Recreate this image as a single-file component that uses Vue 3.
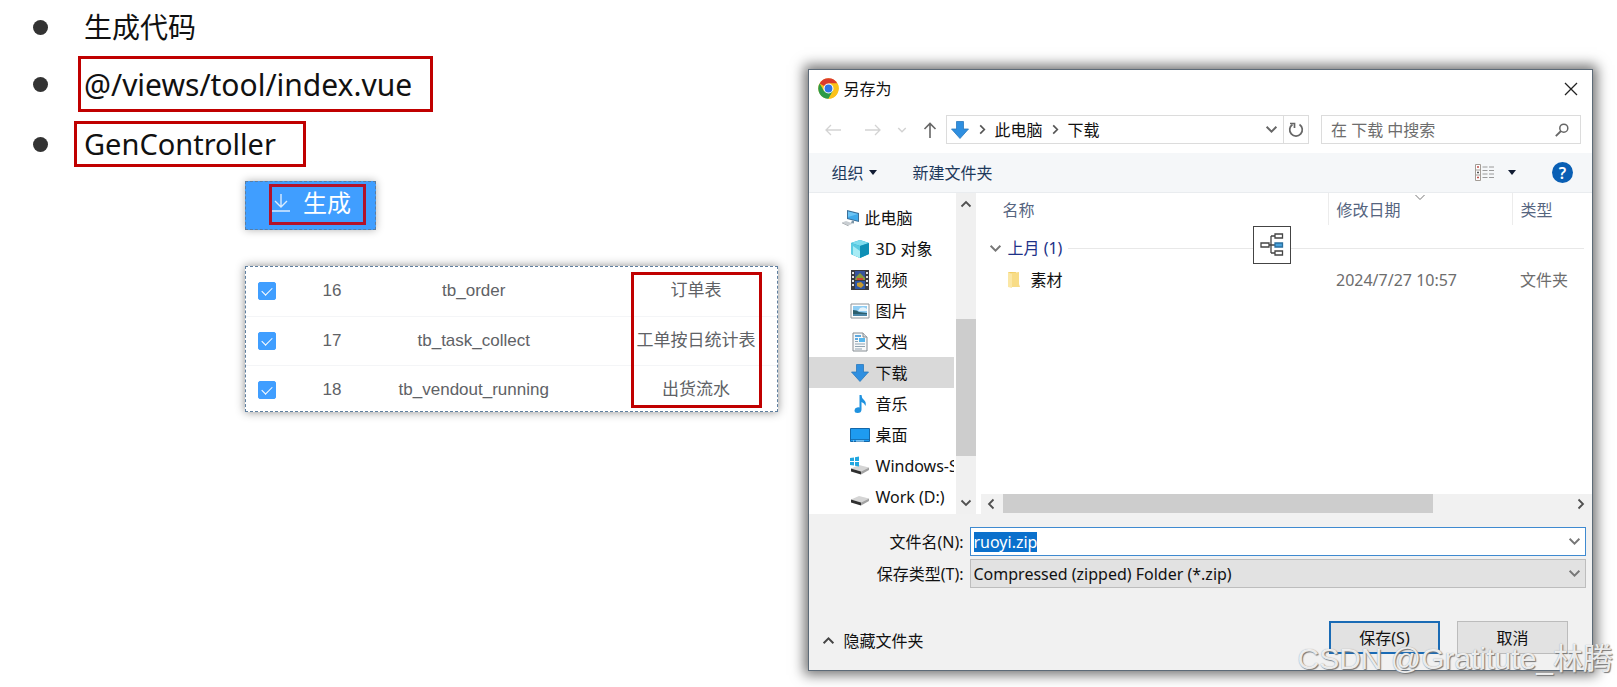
<template>
  <svg class="sprite" aria-hidden="true">
    <symbol id="ico-pc" viewBox="0 0 20 18">
      <path d="M6 1l12 3v9L6 10z" fill="#3c6f98" />
      <path d="M7 2.500l10 2.500v6.700L7 9.200z" fill="#3fa9ea" />
      <path d="M7 2.500l10 2.500-10 3z" fill="#6cc4f5" />
      <path d="M11 11.500l2 .5v2.500l-3-.6z" fill="#7f97a8" />
      <path d="M1 13.500l4-1.500 7 2.500-4.500 2z" fill="#c9ced2" />
      <path d="M1 13.500l6.500 3v.8L1 14.300z" fill="#92999f" />
    </symbol>
    <symbol id="ico-cube" viewBox="0 0 20 20">
      <path d="M10 1l9 3v11l-9 4-9-4V4z" fill="#18a6c8" />
      <path d="M10 1l9 3-9 3-9-3z" fill="#7fdcee" />
      <path d="M1 4l9 3v12l-9-4z" fill="#5ccbe2" />
      <path d="M3 7l7 5v7l-7-3z" fill="#a8ecf5" />
      <path d="M10 7l9-3v11l-9 4z" fill="#0e8fb5" />
    </symbol>
    <symbol id="ico-video" viewBox="0 0 20 20">
      <path d="M1 0h18v20H1z" fill="#3b3b40" />
      <path d="M5 1h10v9H5z" fill="#38549c" />
      <path d="M5 11h10v8H5z" fill="#2c55a5" />
      <path d="M6 7l4-4 5 5v2H5z" fill="#8a9a3a" />
      <path d="M7 8h6v2H7z" fill="#d0443a" />
      <path d="M7 13l4-1 3 3-3 3-4-2z" fill="#c89b2f" />
      <path d="M2 2h2v2H2zM2 6h2v2H2zM2 10h2v2H2zM2 14h2v2H2zM16 2h2v2h-2zM16 6h2v2h-2zM16 10h2v2h-2zM16 14h2v2h-2z" fill="#e8e8e8" />
    </symbol>
    <symbol id="ico-image" viewBox="0 0 20 20">
      <path d="M1 3h18v14H1z" fill="#fff" stroke="#8d9499" />
      <path d="M3 5h14v10H3z" fill="#8fcdf3" />
      <path d="M10 7q4-2 7 1v2H8z" fill="#e4f3fb" />
      <path d="M3 9q4 0 6 2l8 1v3H3z" fill="#2c5f6e" />
      <path d="M3 13h14v2H3z" fill="#4a86a8" />
    </symbol>
    <symbol id="ico-doc" viewBox="0 0 20 20">
      <path d="M3 1h10l4 4v14H3z" fill="#f7f9fa" stroke="#868d93" />
      <path d="M13 1v4h4" fill="#d4dade" stroke="#868d93" />
      <path d="M5 4h6M5 7h3" stroke="#2f8fd6" stroke-width="1.500" />
      <path d="M9 6h6v4H9z" fill="#56b6ec" />
      <path d="M5 9.500h3M5 12h10M5 14.500h10M5 17h7" stroke="#8fa3b1" />
    </symbol>
    <symbol id="ico-down" viewBox="0 0 20 20">
      <path d="M6.500 1.500h7V9h5L10 18.500 1.500 9h5z" fill="#2f8fe0" stroke="#2a78bd" stroke-width=".8" />
    </symbol>
    <symbol id="ico-music" viewBox="0 0 20 20">
      <path d="M9.500 1h2q0 3 2.500 5t1.500 6q-1-3-4-4v7.500q0 3.500-4 3.500-3 0-3-2.500T7 13.500q1.500-.5 2.500 0z" fill="#1f92df" />
    </symbol>
    <symbol id="ico-desk" viewBox="0 0 20 20">
      <path d="M.5 3.500h19v13H.5z" fill="#1e9bf0" stroke="#1467a8" />
      <path d="M1 14.500h18" stroke="#1773b8" />
      <path d="M3 16h1M6 16h8" stroke="#bfe3fa" />
    </symbol>
    <symbol id="ico-disk" viewBox="0 0 20 20">
      <path d="M1 12.500l8-3.500 10 2.500-8 4z" fill="#d5d5d5" />
      <path d="M1 12.500l10 3v3l-10-3z" fill="#2f2f2f" />
      <path d="M11 15.500l8-4v2.500l-8 4.500z" fill="#a3a3a3" />
    </symbol>
    <symbol id="ico-windisk" viewBox="0 0 20 20">
      <use href="#ico-disk" />
      <path d="M0 2l4-.6V5H0zM5 1.200L9 .6V5H5zM0 6h4v3.600L0 9zM5 6h4v4.400l-4-.6z" fill="#22a7e0" />
    </symbol>
    <symbol id="ico-chev" viewBox="0 0 12 12">
      <path d="M1.500 3.500L6 8l4.500-4.500" fill="none" stroke="currentColor" stroke-width="1.800" />
    </symbol>
  </svg>

  <main class="page">
    <section class="notes">
      <ul class="points">
        <li>生成代码</li>
        <li><span class="mark path">@/views/tool/index.vue</span></li>
        <li><span class="mark class-name">GenController</span></li>
      </ul>

      <button type="button" class="gen-btn">
        <span class="gen-mark">
          <svg width="18" height="20" viewBox="0 0 18 20">
            <path d="M9 1v13M3 8l6 6 6-6M0 18h18" fill="none" stroke="#d9ecff" stroke-width="1.400" />
          </svg>
          生成
        </span>
      </button>

      <div class="table-card">
        <table class="gen-table">
          <tbody>
            <tr v-for="row in tables" :key="row.id">
              <td class="col-check">
                <input v-model="row.checked" type="checkbox" :aria-label="row.name" />
              </td>
              <td class="col-id">{{ row.id }}</td>
              <td class="col-name">{{ row.name }}</td>
              <td class="col-comment">{{ row.comment }}</td>
            </tr>
          </tbody>
        </table>
        <div class="column-mark"></div>
      </div>
    </section>

    <section class="dialog" role="dialog" aria-label="另存为">
      <header class="title-bar">
        <svg class="chrome" width="21" height="21" viewBox="0 0 42 42">
          <circle cx="21" cy="21" r="20.500" fill="#fbc21a" />
          <path d="M21 21L3.200 10.800A20.500 20.500 0 0 1 38.800 10.800H21z" fill="#dc3b2c" />
          <path d="M3.200 10.800A20.500 20.500 0 0 0 21 41.500L29.900 26 21 21 12 26z" fill="#2c9a47" />
          <path d="M21 11h17.800A20.500 20.500 0 0 1 21 41.500L30 26z" fill="#fbc21a" />
          <circle cx="21" cy="21" r="10" fill="#fff" />
          <circle cx="21" cy="21" r="7.800" fill="#2f74e6" />
        </svg>
        <span>另存为</span>
        <button type="button" class="close" aria-label="关闭">
          <svg width="14" height="14" viewBox="0 0 14 14">
            <path d="M1 1l12 12M13 1L1 13" stroke="#222" stroke-width="1.300" />
          </svg>
        </button>
      </header>

      <div class="nav-bar">
        <div class="nav-buttons">
          <button type="button" disabled aria-label="后退">
            <svg width="16" height="14" viewBox="0 0 16 14">
              <path d="M16 7H1M6 2L1 7l5 5" fill="none" stroke="#d3d3d3" stroke-width="1.300" />
            </svg>
          </button>
          <button type="button" class="forward" disabled aria-label="前进">
            <svg width="16" height="14" viewBox="0 0 16 14">
              <path d="M0 7h15M10 2l5 5-5 5" fill="none" stroke="#d3d3d3" stroke-width="1.300" />
            </svg>
          </button>
          <button type="button" class="recent" disabled aria-label="最近">
            <svg width="10" height="10"><use href="#ico-chev" /></svg>
          </button>
          <button type="button" aria-label="上移">
            <svg width="14" height="16" viewBox="0 0 14 16">
              <path d="M7 16V1.500M1.500 7L7 1.500 12.500 7" fill="none" stroke="#666" stroke-width="1.600" />
            </svg>
          </button>
        </div>
        <div class="address">
          <svg width="20" height="20"><use href="#ico-down" /></svg>
          <svg class="crumb" width="11" height="11"><use href="#ico-chev" /></svg>
          <span>此电脑</span>
          <svg class="crumb" width="11" height="11"><use href="#ico-chev" /></svg>
          <span>下载</span>
          <button type="button" class="expand" aria-label="展开">
            <svg width="13" height="13"><use href="#ico-chev" /></svg>
          </button>
          <button type="button" class="refresh" aria-label="刷新">
            <svg width="16" height="16" viewBox="0 0 16 16">
              <path d="M11.500 2.500A6.300 6.300 0 1 1 4.500 2.500" fill="none" stroke="#666" stroke-width="1.700" />
              <path d="M2 1.500h4.500V6" fill="none" stroke="#666" stroke-width="1.700" />
            </svg>
          </button>
        </div>
        <label class="search">
          <input v-model="query" type="text" placeholder="在 下载 中搜索" aria-label="搜索" />
          <svg width="14" height="14" viewBox="0 0 14 14">
            <circle cx="8.800" cy="5.200" r="4" fill="none" stroke="#666" stroke-width="1.500" />
            <path d="M6 8L.8 13.200" stroke="#666" stroke-width="1.800" />
          </svg>
        </label>
      </div>

      <div class="tool-bar">
        <button type="button">组织<i class="caret"></i></button>
        <button type="button">新建文件夹</button>
        <button type="button" class="view" aria-label="更改视图">
          <svg width="19" height="17" viewBox="0 0 19 17">
            <path d="M.5.5h5v16h-5zM.5 6h5M.5 11h5" fill="#fff" stroke="#a39c96" />
            <path d="M2 3h2M2 13.500h2" stroke="#c0504d" stroke-width="1.500" />
            <path d="M2 8.500h2" stroke="#555" stroke-width="1.500" />
            <path d="M7.500 3h5M14 3h5M7.500 6.500h5M14 6.500h5M7.500 10h5M14 10h5M7.500 13.500h5M14 13.500h5" stroke="#9a9a9a" />
          </svg>
          <i class="caret"></i>
        </button>
        <button type="button" class="help" aria-label="帮助">?</button>
      </div>

      <div class="browser">
        <nav class="tree">
          <ul>
            <li
              v-for="place in places"
              :key="place.label"
              :class="{ root: place.root, selected: place.label === selected }"
              @click="selected = place.label"
            >
              <svg width="20" height="20"><use :href="'#ico-' + place.icon" /></svg>
              <span>{{ place.label }}</span>
            </li>
          </ul>
          <div class="v-scroll">
            <svg class="up" width="12" height="12"><use href="#ico-chev" /></svg>
            <div class="thumb"></div>
            <svg width="12" height="12"><use href="#ico-chev" /></svg>
          </div>
        </nav>

        <div class="files">
          <table>
            <thead>
              <tr>
                <th class="f-name">名称</th>
                <th class="f-date">
                  修改日期
                  <svg class="sort" width="12" height="12" viewBox="0 0 12 12">
                    <path d="M1.500 2L6 6.500 10.500 2" fill="none" stroke="#777" />
                  </svg>
                </th>
                <th class="f-type">类型</th>
              </tr>
            </thead>
            <tbody>
              <tr>
                <td colspan="3" class="group">
                  <div class="group-line">
                    <svg width="13" height="13"><use href="#ico-chev" /></svg>
                    <span>上月 (1)</span>
                  </div>
                </td>
              </tr>
              <tr>
                <td class="f-name">
                  <div class="file-name">
                    <svg width="14" height="18" viewBox="0 0 14 18">
                      <path d="M1 1h8v15H1z" fill="#f0cc63" />
                      <path d="M4 2l8-1v12l1 3H4z" fill="#f8dc86" />
                      <path d="M1 1l4 2v14l-4-1z" fill="#fbe7a5" />
                    </svg>
                    <span>素材</span>
                  </div>
                </td>
                <td class="f-date">2024/7/27 10:57</td>
                <td class="f-type">文件夹</td>
              </tr>
            </tbody>
          </table>
          <div class="h-scroll">
            <svg class="left" width="12" height="12"><use href="#ico-chev" /></svg>
            <div class="track"><div class="thumb"></div></div>
            <svg class="right" width="12" height="12"><use href="#ico-chev" /></svg>
          </div>
          <div class="layout-badge">
            <svg width="24" height="24" viewBox="0 0 24 24">
              <path d="M8 12h7M11 3v17M11 3h4M11 20h4" fill="none" stroke="#444" stroke-width="1.300" />
              <path d="M1 10h8v4H1zM15 1h7.500v4H15zM15 18h7.500v4H15z" fill="#fff" stroke="#444" stroke-width="1.300" />
              <path d="M15 10h7.500v4H15z" fill="#4aa3dc" stroke="#2a6f9f" stroke-width="1.300" />
            </svg>
          </div>
        </div>
      </div>

      <footer class="foot">
        <div class="field">
          <label for="file-name">文件名(N):</label>
          <div class="control">
            <input id="file-name" ref="nameInput" v-model="fileName" type="text" />
            <svg width="13" height="13"><use href="#ico-chev" /></svg>
          </div>
        </div>
        <div class="field">
          <label for="file-type">保存类型(T):</label>
          <div class="control grey">
            <select id="file-type">
              <option>Compressed (zipped) Folder (*.zip)</option>
            </select>
            <svg width="13" height="13"><use href="#ico-chev" /></svg>
          </div>
        </div>
        <div class="actions">
          <button type="button" class="hide-folders">
            <svg width="13" height="13"><use href="#ico-chev" /></svg>
            隐藏文件夹
          </button>
          <button type="button" class="btn primary">保存(S)</button>
          <button type="button" class="btn">取消</button>
        </div>
      </footer>
    </section>

    <div class="watermark">CSDN @Gratitute_林腾</div>
  </main>
</template>

<script setup>
import { ref, onMounted } from 'vue'

const tables = ref([
  { id: 16, name: 'tb_order', comment: '订单表', checked: true },
  { id: 17, name: 'tb_task_collect', comment: '工单按日统计表', checked: true },
  { id: 18, name: 'tb_vendout_running', comment: '出货流水', checked: true }
])

const places = [
  { label: '此电脑', icon: 'pc', root: true },
  { label: '3D 对象', icon: 'cube' },
  { label: '视频', icon: 'video' },
  { label: '图片', icon: 'image' },
  { label: '文档', icon: 'doc' },
  { label: '下载', icon: 'down' },
  { label: '音乐', icon: 'music' },
  { label: '桌面', icon: 'desk' },
  { label: 'Windows-SSD (C:)', icon: 'windisk' },
  { label: 'Work (D:)', icon: 'disk' }
]

const selected = ref('下载')
const query = ref('')
const fileName = ref('ruoyi.zip')
const nameInput = ref(null)

onMounted(() => {
  nameInput.value.focus()
  nameInput.value.select()
})
</script>

<style>
body {
  margin: 0;
  background: #fff;
}
</style>

<style scoped>
* {
  box-sizing: border-box;
}

.sprite {
  position: absolute;
  width: 0;
  height: 0;
}

button,
input,
select {
  font: inherit;
  color: inherit;
  margin: 0;
  padding: 0;
  border: 0;
  background: none;
}

ul {
  list-style: none;
  margin: 0;
  padding: 0;
}

svg {
  display: block;
  flex: none;
}

.page {
  position: relative;
  display: grid;
  grid-template-columns: 1fr 1fr;
  align-items: start;
  font-family: "Noto Sans", "Noto Sans CJK SC", sans-serif;
  font-size: 16px;
  line-height: 20px;
  color: #111;
}

/* left side */
.notes {
  padding-right: 31px;
}

.points li {
  display: flex;
  align-items: center;
  height: 60px;
  padding-left: 33px;
  font-size: 28px;
  line-height: 40px;
  white-space: nowrap;
}

.points li:first-child {
  height: 54px;
}

.points li::before {
  content: "";
  width: 15px;
  height: 15px;
  margin-right: 36px;
  border-radius: 50%;
  background: #333;
}

.mark {
  border: 3px solid #c00000;
}

.path {
  margin-left: -6px;
  padding: 6px 18px 4px 3px;
  font-size: 30px;
}

.class-name {
  margin-left: -10px;
  padding: 0 27px 0 7px;
  font-size: 29px;
}

.gen-btn {
  display: flex;
  margin: 7px 0 0 245px;
  padding: 2px 9px 4px 23px;
  border: 1px dashed #5a7ea3;
  background: #409eff;
  box-shadow: 0 0 8px rgba(0, 0, 0, 0.3);
}

.gen-mark {
  display: flex;
  align-items: center;
  gap: 13px;
  width: 97px;
  height: 41px;
  padding-bottom: 4px;
  border: 3px solid #b3122a;
  color: #fff;
  font-size: 24px;
  line-height: 32px;
}

.table-card {
  position: relative;
  margin: 36px 0 0 245px;
  border: 1px dashed #5f7f9f;
  box-shadow: 0 0 9px rgba(0, 0, 0, 0.45);
}

.gen-table {
  width: 100%;
  border-collapse: collapse;
  font-family: "Liberation Sans", "Noto Sans CJK SC", sans-serif;
  font-size: 17px;
  line-height: 24px;
  color: #606266;
}

.gen-table td {
  height: 49px;
  padding: 0;
  text-align: center;
  border-bottom: 1px solid #f4f5f7;
}

.gen-table tr:last-child td {
  height: 46px;
  padding-top: 3px;
  border-bottom: 0;
}

.gen-table .col-check {
  width: 49px;
  padding-left: 12px;
  text-align: left;
}

.col-id {
  width: 74px;
}

.gen-table .col-comment {
  width: 198px;
  padding-left: 37px;
}

.col-check input {
  display: block;
  position: relative;
  width: 18px;
  height: 18px;
  appearance: none;
  border: 1px solid #409eff;
  border-radius: 2px;
  background: #fff;
}

.col-check input:checked {
  background: #409eff;
}

.col-check input:checked::after {
  content: "";
  position: absolute;
  left: 5px;
  top: 2px;
  width: 5px;
  height: 9px;
  border: solid #fff;
  border-width: 0 1px 1px 0;
  transform: rotate(45deg);
}

.column-mark {
  position: absolute;
  top: 5px;
  right: 15px;
  bottom: 3px;
  width: 131px;
  border: 3px solid #c00000;
}

/* save dialog */
.dialog {
  min-width: 0;
  margin: 69px 24px 16px -1px;
  border: 1px solid #5d6b78;
  background: #fff;
  box-shadow: 0 0 12px 4px rgba(0, 0, 0, 0.55);
}

.title-bar {
  display: flex;
  align-items: center;
  gap: 5px;
  height: 38px;
  padding: 0 14px 1px 9px;
}

.close {
  margin-left: auto;
}

.nav-bar {
  display: flex;
  align-items: center;
  height: 45px;
  padding: 0 11px 2px 0;
}

.nav-buttons {
  display: flex;
  align-items: center;
  justify-content: space-between;
  width: 137px;
  padding: 0 9px 0 16px;
}

.forward {
  margin-left: 8px;
}

.recent {
  color: #d3d3d3;
}

.address {
  display: flex;
  flex: 1;
  align-items: center;
  height: 29px;
  padding-left: 3px;
  border: 1px solid #dcdcdc;
}

.crumb {
  margin: 0 7px;
  color: #555;
  transform: rotate(-90deg);
}

.expand {
  margin-left: auto;
  padding: 0 5px;
  color: #666;
}

.refresh {
  display: flex;
  align-items: center;
  height: 100%;
  padding: 0 4px;
  border-left: 1px solid #dcdcdc;
}

.search {
  display: flex;
  align-items: center;
  width: 260px;
  height: 29px;
  margin-left: 12px;
  padding: 0 11px 0 9px;
  border: 1px solid #dcdcdc;
}

.search input {
  flex: 1;
  min-width: 0;
  outline: 0;
}

.search input::placeholder {
  color: #6d6d6d;
}

.tool-bar {
  display: flex;
  align-items: center;
  height: 40px;
  padding: 0 19px 0 23px;
  border-bottom: 1px solid #e9ecef;
  background: #f5f7f9;
  color: #1e395b;
}

.tool-bar button {
  display: flex;
  align-items: center;
  margin-right: 36px;
}

.caret {
  margin-left: 5px;
  border: 4px solid transparent;
  border-top: 5px solid #111c33;
  border-bottom: 0;
}

.tool-bar .view {
  margin-left: auto;
}

.view .caret {
  margin-left: 14px;
}

.tool-bar .help {
  justify-content: center;
  width: 21px;
  height: 21px;
  margin-right: 0;
  border-radius: 50%;
  background: #0a5fb4;
  color: #fff;
  font-weight: 600;
}

.browser {
  display: flex;
  height: 321px;
}

.tree {
  display: flex;
  width: 167px;
}

.tree ul {
  width: 145px;
  margin-right: 2px;
  padding-top: 9px;
  overflow: hidden;
}

.tree li {
  display: flex;
  align-items: center;
  gap: 6px;
  height: 31px;
  padding-left: 41px;
  white-space: nowrap;
  cursor: pointer;
}

.tree .root {
  gap: 4px;
  padding-left: 32px;
}

.tree .selected {
  background: #d9d9d9;
}

.v-scroll {
  display: flex;
  flex-direction: column;
  align-items: center;
  width: 20px;
  padding: 5px 0;
  background: #f0f0f0;
  color: #505050;
}

.v-scroll .up {
  transform: rotate(180deg);
}

.v-scroll .thumb {
  width: 20px;
  height: 137px;
  margin: auto 0 41px;
  background: #cdcdcd;
}

.files {
  position: relative;
  display: flex;
  flex: 1;
  flex-direction: column;
  justify-content: space-between;
  min-width: 0;
}

.files table {
  width: 100%;
  border-collapse: collapse;
  table-layout: fixed;
}

.files th {
  position: relative;
  height: 32px;
  padding: 1px 0 0 8px;
  text-align: left;
  font-weight: 400;
  color: #56657f;
}

.files th + th {
  border-left: 1px solid #ececec;
}

.files .f-name {
  padding-left: 27px;
}

.f-date {
  width: 184px;
}

.f-type {
  width: 80px;
}

.sort {
  position: absolute;
  top: 0;
  left: 50%;
  margin-left: -6px;
}

.files td {
  height: 32px;
  padding: 0 0 0 8px;
  color: #6d6d6d;
}

.files .group {
  height: 39px;
  padding: 7px 8px 0 13px;
}

.group-line {
  display: flex;
  align-items: center;
  gap: 6px;
  color: #1e3287;
}

.group-line svg {
  color: #777;
}

.group-line::after {
  content: "";
  flex: 1;
  height: 1px;
  background: #e8e8e8;
}

.file-name {
  display: flex;
  align-items: center;
  gap: 10px;
  padding-left: 4px;
  color: #111;
}

.h-scroll {
  display: flex;
  align-items: center;
  gap: 6px;
  margin-left: 5px;
  padding: 0 5px 1px 4px;
  background: #f1f1f1;
  color: #505050;
}

.h-scroll .left {
  transform: rotate(90deg);
}

.h-scroll .right {
  transform: rotate(-90deg);
}

.track {
  flex: 1;
}

.track .thumb {
  width: 76%;
  height: 19px;
  background: #cdcdcd;
}

.layout-badge {
  position: absolute;
  top: 33px;
  right: 301px;
  padding: 6px;
  border: 1px solid #444;
  background: #fff;
}

.foot {
  padding: 13px 6px 16px 0;
  background: #f1f1f1;
}

.field {
  display: flex;
  align-items: center;
  margin-bottom: 3px;
}

.field label {
  width: 155px;
  text-align: right;
}

.control {
  display: flex;
  flex: 1;
  align-items: center;
  height: 29px;
  margin-left: 6px;
  padding: 0 4px 0 3px;
  border: 1px solid #3f8ad0;
  background: #fff;
  color: #111;
}

.control.grey {
  border-color: #bdbdbd;
  background: #e2e2e2;
}

.control input,
.control select {
  flex: 1;
  min-width: 0;
  appearance: none;
  outline: 0;
}

.control input::selection {
  background: #0a70cc;
  color: #fff;
}

.control svg {
  color: #777;
}

.actions {
  display: flex;
  align-items: center;
  padding: 30px 18px 0 13px;
}

.hide-folders {
  display: flex;
  align-items: center;
  gap: 9px;
  margin-right: auto;
  padding-top: 6px;
}

.hide-folders svg {
  color: #444;
  transform: rotate(180deg);
}

.btn {
  width: 111px;
  height: 33px;
  margin-left: 17px;
  border: 1px solid #bcbcbc;
  background: #e2e2e2;
}

.btn.primary {
  border: 2px solid #1a6bb5;
}

.watermark {
  position: absolute;
  right: 4px;
  bottom: 8px;
  font-family: "Liberation Sans", "Noto Sans CJK SC", sans-serif;
  font-size: 30px;
  line-height: 40px;
  color: rgba(255, 255, 255, 0.85);
  text-shadow: 1px 1px 1px #777, 0 0 1px #999;
  white-space: nowrap;
  pointer-events: none;
}
</style>
